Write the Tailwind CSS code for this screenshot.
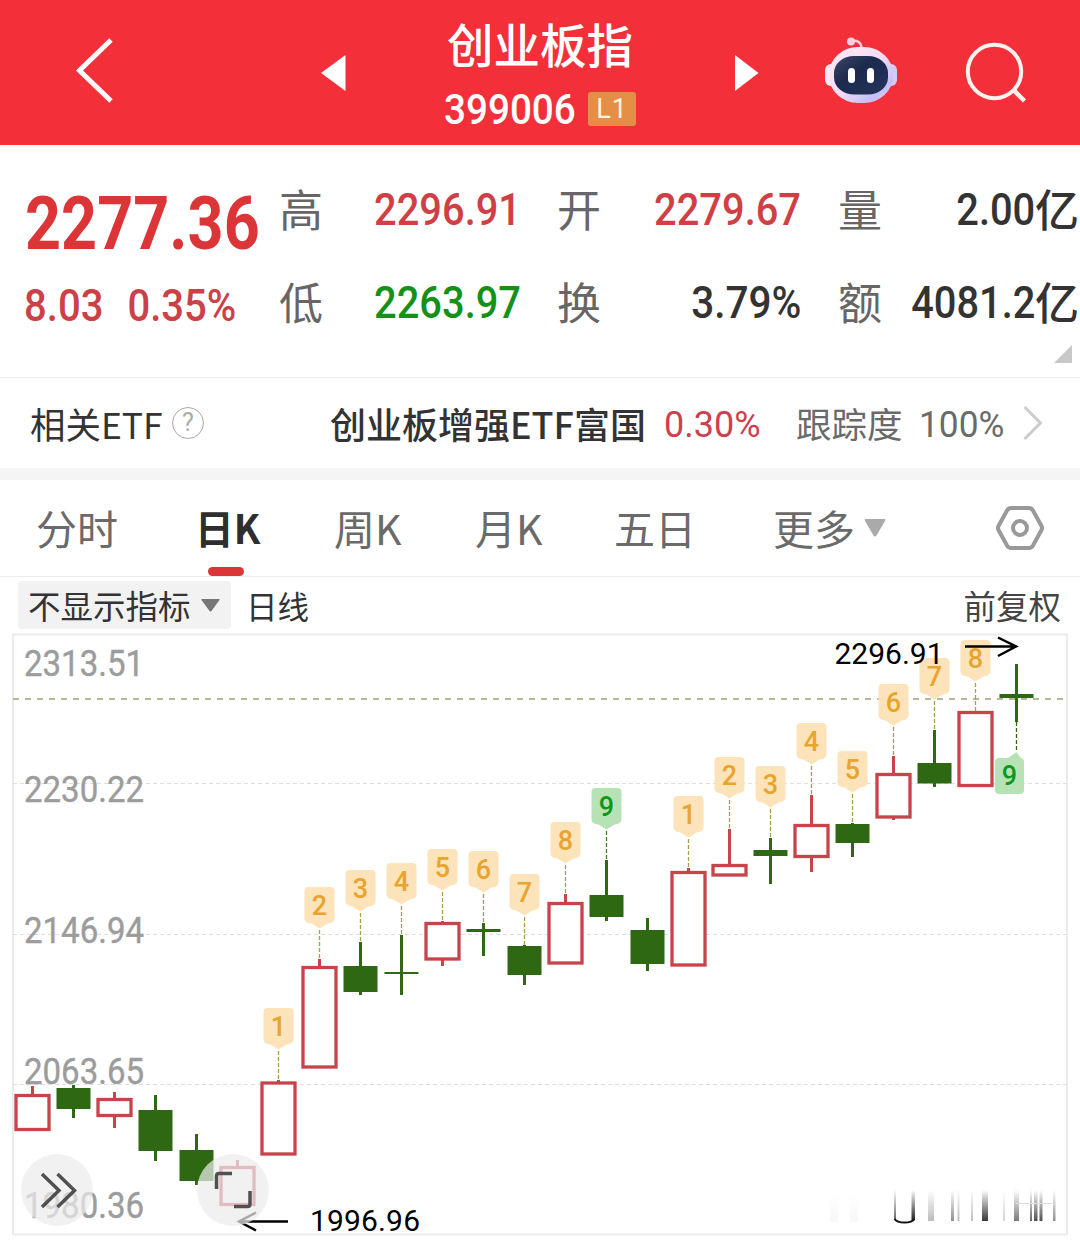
<!DOCTYPE html>
<html lang="zh-CN">
<head>
<meta charset="utf-8">
<title>创业板指 399006</title>
<script src="https://cdn.jsdelivr.net/npm/@tailwindcss/browser@4"></script>
</head>
<body class="w-[1080px] h-[1246px] overflow-hidden bg-white font-['Noto_Sans_CJK_SC',sans-serif] text-[#333]">

<!-- Title bar -->
<header class="flex h-[145px] bg-[#f33039] text-white">
  <svg class="ml-[70px] h-[145px] w-[50px] shrink-0" viewBox="70 0 50 145" fill="none" stroke="#fff" stroke-width="5"><path d="M111 40 79.500 70.500 111 101"/></svg>
  <svg class="ml-[200px] h-[145px] w-[26px] shrink-0" viewBox="320 0 26 145" fill="#fff"><path d="M321 73 345.500 55V91z"/></svg>
  <div class="ml-[54px] flex w-[280px] shrink-0 flex-col items-center">
    <h1 class="mt-[17px] h-[52px] text-[46.500px] leading-[52px] font-medium">创业板指</h1>
    <div class="mt-[20px] flex h-[40px] w-[192px] items-center">
      <span class="mt-[2px] w-[131px] origin-left scale-x-[.92] whitespace-nowrap font-[Roboto] text-[42px] leading-[40px] font-medium">399006</span>
      <span class="ml-[13px] flex h-[34px] w-[48px] items-center justify-center rounded-[3px] bg-[#e58e45] font-[Roboto] text-[27px] leading-none tracking-[1px] text-[#fff3dc]">L1</span>
    </div>
  </div>
  <svg class="ml-[54px] h-[145px] w-[26px] shrink-0" viewBox="734 0 26 145" fill="#fff"><path d="M735 55V91L758.500 73z"/></svg>
  <svg class="ml-[60px] h-[145px] w-[80px] shrink-0" viewBox="820 0 80 145">
    <defs>
      <linearGradient id="shell" x1="0" y1="0" x2="1" y2="1"><stop offset="0" stop-color="#fdeaf4"/><stop offset=".5" stop-color="#f4dcf5"/><stop offset=".8" stop-color="#c3bff8"/><stop offset="1" stop-color="#f5d3ea"/></linearGradient>
      <linearGradient id="visor" x1="0" y1="0" x2="1" y2="1"><stop offset="0" stop-color="#3c4767"/><stop offset=".4" stop-color="#1c2a4e"/><stop offset="1" stop-color="#26335c"/></linearGradient>
    </defs>
    <path d="M851 41.500C857 39.500 861 42 861.500 48" fill="none" stroke="#fbcfe0" stroke-width="2.500"/>
    <circle cx="851" cy="41.500" r="4" fill="#fbcfe0"/>
    <rect x="825" y="64" width="14" height="22" rx="6" fill="#f6eaf8"/>
    <rect x="883" y="64" width="14" height="22" rx="6" fill="#d5cbf8"/>
    <rect x="829" y="47" width="64" height="56" rx="29" ry="27" fill="url(#shell)"/>
    <rect x="834" y="56" width="54" height="38.500" rx="20" ry="17" fill="url(#visor)"/>
    <rect x="848" y="68" width="7" height="15" rx="3.500" fill="#fff"/>
    <rect x="867" y="68" width="7" height="15" rx="3.500" fill="#fff"/>
  </svg>
  <svg class="ml-[60px] h-[145px] w-[70px] shrink-0" viewBox="960 0 70 145" fill="none" stroke="#fff1ee" stroke-width="4"><circle cx="994.500" cy="71.500" r="26.700"/><path d="M1013.500 90 1024.500 101" stroke-width="4.500"/></svg>
</header>

<!-- Quote summary -->
<section class="flex h-[232px] w-[1080px] pt-[37px]">
  <div class="w-[279px] shrink-0 pt-[2px] pl-[24px] font-[Roboto] text-[#dc3538]">
    <div class="h-[80px] w-[250px] origin-left translate-x-[1px] scale-x-[.85] whitespace-nowrap text-[74px] leading-[80px] font-bold">2277.36</div>
    <div class="mt-[17px] flex h-[50px] origin-left scale-x-[.89] gap-[27px] whitespace-nowrap text-[45px] leading-[50px] font-medium text-[#cb4147]"><span>8.03</span><span>0.35%</span></div>
  </div>
  <div class="grid h-[144px] w-[801px] shrink-0 grid-cols-[242px_245px_241px] grid-rows-[52px_52px] gap-x-[36px] gap-y-[41px] text-[44px] leading-[52px]">
    <div class="flex justify-between"><span class="text-[#666]">高</span><span class="mt-[2px] origin-right scale-x-[.885] font-[Roboto] text-[45px] font-medium text-[#cf3f45]">2296.91</span></div>
    <div class="flex justify-between"><span class="text-[#666]">开</span><span class="mt-[2px] origin-right -translate-x-[1px] scale-x-[.885] font-[Roboto] text-[45px] font-medium text-[#cf3f45]">2279.67</span></div>
    <div class="flex justify-between"><span class="text-[#666]">量</span><span class="flex"><span class="mt-[2px] origin-right scale-x-[.885] font-[Roboto] text-[45px] font-medium">2.00</span><span class="font-medium">亿</span></span></div>
    <div class="flex justify-between"><span class="text-[#666]">低</span><span class="mt-[2px] origin-right scale-x-[.885] font-[Roboto] text-[45px] font-medium text-[#159018]">2263.97</span></div>
    <div class="flex justify-between"><span class="text-[#666]">换</span><span class="mt-[2px] origin-right -translate-x-[1px] scale-x-[.9] font-[Roboto] text-[45px] font-medium">3.79%</span></div>
    <div class="flex justify-between"><span class="text-[#666]">额</span><span class="-ml-10 flex"><span class="mt-[2px] origin-right scale-x-[.885] font-[Roboto] text-[45px] font-medium">4081.2</span><span class="font-medium">亿</span></span></div>
  </div>
  <svg class="-ml-[26px] mt-[163px] h-[18px] w-[18px] shrink-0" viewBox="0 0 18 18" fill="#c8c8c8"><path d="M0 18 18 0V18z"/></svg>
</section>

<!-- Related ETF -->
<section class="flex h-[91px] items-center border-t border-[#ececec] text-[36px] leading-[52px] whitespace-nowrap">
  <span class="ml-[30px] w-[142px] shrink-0 origin-left scale-x-[.985]">相关ETF</span>
  <span class="-mt-[1px] flex h-[32px] w-[32px] shrink-0 items-center justify-center rounded-full border-[1.500px] border-[#aaa] font-[Roboto] text-[25px] leading-none text-[#aaa]">?</span>
  <span class="ml-[126px] w-[334px] shrink-0 font-medium">创业板增强ETF富国</span>
  <span class="mt-[4px] w-[132px] shrink-0 font-[Roboto] text-[#cf3f50]">0.30%</span>
  <span class="w-[123px] shrink-0 text-[35.500px] text-[#6a6a6a]">跟踪度</span>
  <span class="mt-[4px] w-[102px] shrink-0 origin-left scale-x-[.98] font-[Roboto] text-[#6a6a6a]">100%</span>
  <svg class="h-[36px] w-[22px]" viewBox="0 0 22 36" fill="none" stroke="#ccc" stroke-width="3"><path d="M3.500 2 19.500 18 3.500 34"/></svg>
</section>
<div class="h-[12px] bg-[#f5f5f5]"></div>

<!-- Period tabs -->
<nav class="flex h-[97px] border-b border-[#ececec] text-[41px] leading-[95px] whitespace-nowrap text-[#6a6a6a]">
  <span class="ml-[36px] w-[159px] shrink-0">分时</span>
  <span class="flex w-[139px] shrink-0 flex-col font-bold text-[#2e2e2e]"><span class="h-[87px] origin-left scale-x-[.97] leading-[95px] text-[40px]">日K</span><i class="ml-[13px] h-[9px] w-[36px] rounded-full bg-[#dc3538]"></i></span>
  <span class="w-[141px] shrink-0">周K</span>
  <span class="w-[139px] shrink-0">月K</span>
  <span class="w-[159px] shrink-0">五日</span>
  <span class="w-[91px] shrink-0">更多</span>
  <svg class="mt-[38px] h-[20px] w-[22px] shrink-0" viewBox="0 0 22 20" fill="#aaa"><path d="M1.500 1H20.500Q22 1 21 3L12.500 17.500Q11 19.500 9.500 17.500L1 3Q0 1 1.500 1z"/></svg>
  <svg class="ml-[109px] mt-[24px] h-[48px] w-[50px] shrink-0" viewBox="995 504 50 48" fill="none" stroke="#999" stroke-width="4" stroke-linejoin="round"><path d="M1011 508H1029Q1031.500 508 1033 510.500L1041.500 526Q1042.500 528 1041.500 530L1033 545.500Q1031.500 548 1029 548H1011Q1008.500 548 1007 545.500L998.500 530Q997.500 528 998.500 526L1007 510.500Q1008.500 508 1011 508z"/><circle cx="1020" cy="528" r="7"/></svg>
</nav>

<!-- Indicator bar -->
<div class="flex h-[56px] items-start pt-[4px] text-[32.500px] leading-[48px] whitespace-nowrap">
  <div class="ml-[18px] flex h-[48px] w-[213px] items-center rounded-[4px] bg-[#f2f2f2] pl-[10px]">
    <span class="w-[173px]">不显示指标</span>
    <svg class="h-[13px] w-[19px]" viewBox="0 0 19 13" fill="#777"><path d="M1 0H18Q19 0 18.500 1L10.500 12Q9.500 13 8.500 12L.5 1Q0 0 1 0z"/></svg>
  </div>
  <span class="ml-[15px] text-[31.500px]">日线</span>
  <span class="ml-auto mr-[19px] text-[#444]">前复权</span>
</div>

<!-- Candlestick chart -->
<svg id="chart" class="block h-[613px] w-[1080px]" viewBox="0 633 1080 613">
  <defs>
    <linearGradient id="fade" x1="0" y1="0" x2="0" y2="1"><stop offset="0" stop-color="#222" stop-opacity="0"/><stop offset="1" stop-color="#222"/></linearGradient>
  </defs>
  <rect x="13" y="634.500" width="1054" height="600" fill="none" stroke="#ebebeb" stroke-width="2"/>
  <g stroke="#dedede" stroke-dasharray="4 3"><path d="M13 783.500H1066M13 934.500H1066M13 1084.500H1066"/></g>
  <g font-family="Roboto" font-size="36" fill="#9c9c9c" stroke="#9c9c9c" stroke-width=".4">
    <text x="24" y="676" textLength="120" lengthAdjust="spacingAndGlyphs">2313.51</text>
    <text x="24" y="801.500" textLength="120" lengthAdjust="spacingAndGlyphs">2230.22</text>
    <text x="24" y="942.500" textLength="120" lengthAdjust="spacingAndGlyphs">2146.94</text>
    <text x="24" y="1084" textLength="120" lengthAdjust="spacingAndGlyphs">2063.65</text>
    <text x="24" y="1217.500" textLength="120" lengthAdjust="spacingAndGlyphs">1980.36</text>
  </g>
  <path d="M13 699H1066" stroke="#a2a277" stroke-width="1.700" stroke-dasharray="6 6"/>
  <g id="candles"></g>
  <g id="tags"></g>
  <g fill="none" stroke="#000" stroke-width="2.500"><path d="M965 646.500H1016M998 637.500 1016 646.500 998 656"/><path d="M240 1221.500H288M256 1212.500 239 1221.500 256 1230.500"/></g>
  <g font-family="Roboto" font-size="30" fill="#000"><text x="834.500" y="664" textLength="109">2296.91</text><text x="310" y="1231" textLength="110">1996.96</text></g>
  <g id="digits" font-family="Roboto" font-weight="500" font-size="27" text-anchor="middle"></g>
  <g fill="#ebebeb" fill-opacity=".72"><circle cx="57" cy="1190" r="36"/><circle cx="233" cy="1190" r="36"/></g>
  <g fill="none" stroke="#505050" stroke-width="3.500"><path d="M42 1174 59 1190.500 42 1207M57.500 1174 74.500 1190.500 57.500 1207"/><path d="M216.500 1189V1176Q216.500 1173.500 219 1173.500H232M234 1206.500H247.500Q250 1206.500 250 1204V1191"/></g>
  <g fill="url(#fade)">
    <rect x="830" y="1192" width="8" height="30" opacity=".03"/><rect x="850" y="1192" width="8" height="30" opacity=".03"/>
    <rect x="894" y="1190" width="2" height="30" opacity=".7"/><rect x="911.500" y="1190" width="3.500" height="30"/>
    <rect x="928" y="1190" width="6" height="31" opacity=".3"/><rect x="951" y="1190" width="3" height="31" opacity=".5"/>
    <rect x="957.500" y="1190" width="2" height="31" opacity=".3"/><rect x="971" y="1190" width="2" height="31" opacity=".3"/>
    <rect x="982" y="1190" width="6" height="31" opacity=".9"/><rect x="1003" y="1190" width="2" height="31" opacity=".2"/>
    <rect x="1014" y="1190" width="5" height="31" opacity=".6"/><rect x="1030" y="1190" width="2" height="31" opacity=".7"/>
    <rect x="1034" y="1190" width="3.500" height="31" opacity=".8"/><rect x="1039.500" y="1190" width="3" height="31" opacity=".8"/>
    <rect x="1053" y="1190" width="2.500" height="31" opacity=".5"/>
  </g>
  <path d="M894.500 1219Q897 1222.500 904.500 1222.500T914.500 1219" fill="none" stroke="#111" stroke-width="2"/>
  <path d="M1016 1203.500H1056" stroke="#ddd"/>
</svg>

<script>
// [direction, high, body top, body bottom, low]
const candles = [
  ['u',1086,1094,1131,1131],['d',1085,1088,1109,1118],['u',1092,1098,1117,1128],['d',1095,1110,1151,1161],
  ['d',1134,1150,1181,1185],['u',1160,1166,1206,1206],['u',1080,1081.5,1155.5,1155],['u',959,966,1068.5,1068],
  ['d',942,966,992,995],['d',935,972,974,995],['u',921,922,960.5,966],['d',923,929,932,956],
  ['d',945,946,975,985],['u',894,902,964.5,964],['d',860,895,917,921],['d',918,930,964,971],
  ['u',868,871,966.5,966],['u',829,864,876.5,876],['d',838,850,856,884],['u',795,824,858,872],
  ['d',823,824,843,857],['u',756,773,818.5,820],['d',730,763,783.5,787],['u',711,711,787,787],['d',664,694,698,722]];
// candle index -> [count, tag top]
const tags = {6:[1,1008],7:[2,887],8:[3,870],9:[4,863],10:[5,849],11:[6,851],12:[7,874],13:[8,822],14:[9,788],
  16:[1,796],17:[2,757],18:[3,766],19:[4,723],20:[5,751],21:[6,684],22:[7,658],23:[8,640]};
let c = '', t = '', d = '';
candles.forEach(([dir, hi, top, bot, lo], i) => {
  const x = 32.5 + 41 * i, col = dir === 'u' ? '#c8434a' : '#2f6812';
  const wick = dir === 'u' ? `M${x} ${hi}V${top + 1}M${x} ${bot - 1}V${Math.max(lo, bot - 1)}` : `M${x} ${hi}V${lo}`;
  c += `<path d="${wick}" stroke="${col}" stroke-width="3"/>`;
  c += dir === 'u'
    ? `<rect x="${x - 16.5}" y="${top + 1.5}" width="33" height="${bot - top - 3}" fill="#fff" stroke="${col}" stroke-width="3.3"/>`
    : `<rect x="${x - 17}" y="${top}" width="34" height="${bot - top}" fill="${col}"/>`;
  if (tags[i]) {
    const [n, y] = tags[i], g = n === 9;
    t += `<path d="M${x} ${y + 43}V${hi}" stroke="${g ? '#3d7d2c' : '#a5a04a'}" stroke-width="1.300" stroke-dasharray="4 2"/>`;
    t += `<path d="M${x - 11} ${y}h22q4 0 4 4v27q0 4 -4 5l-3 .5l-8 5l-8 -5l-3 -.5q-4 -1 -4 -5v-27q0 -4 4 -4z" fill="${g ? '#b3e0b1' : '#fce1b5'}" fill-opacity=".95"/>`;
    d += `<text x="${x}" y="${y + 27.5}" fill="${g ? '#0d981a' : '#e8a42e'}">${n}</text>`;
  }
});
t += '<path d="M1016.500 722V752" stroke="#2f6812" stroke-width="1.300" stroke-dasharray="4 2"/>';
t += '<path d="M999 758h9l8.500 -6l4.500 6q3 .5 3 4v28q0 4 -4 4h-21q-4 0 -4 -4v-28q0 -4 4 -4z" fill="#b3e0b1" fill-opacity=".95"/>';
d += '<text x="1009.500" y="784.500" fill="#0d981a">9</text>';
document.getElementById('candles').innerHTML = c;
document.getElementById('tags').innerHTML = t;
document.getElementById('digits').innerHTML = d;
</script>
</body>
</html>
